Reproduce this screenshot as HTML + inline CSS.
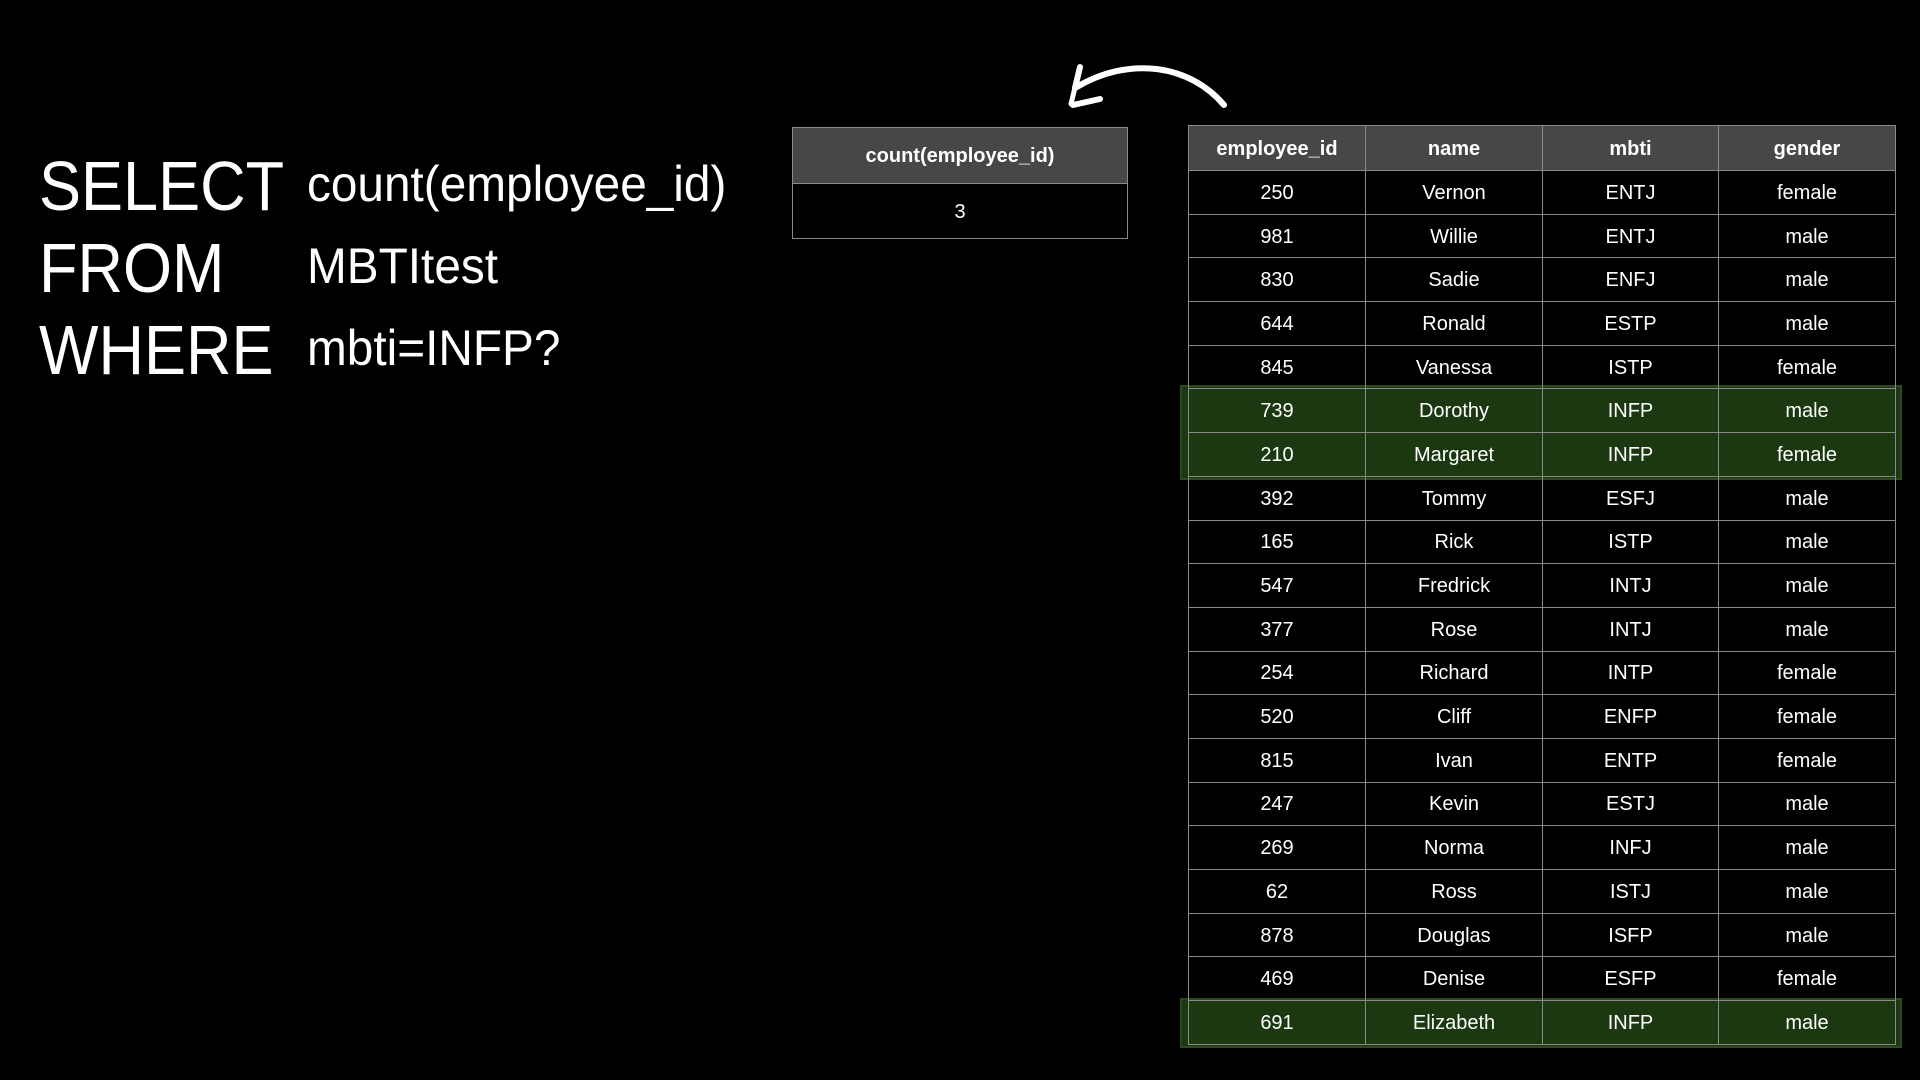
<!DOCTYPE html>
<html><head><meta charset="utf-8"><style>
body{margin:0;width:1920px;height:1080px;background:#000;position:relative;overflow:hidden;font-family:"Liberation Sans",Arial,sans-serif;color:#fff}
.big{position:absolute;left:39px;font-size:70px;line-height:1;transform:scaleX(0.9);transform-origin:0 0}
.small{position:absolute;left:307px;font-size:50px;line-height:1;transform:scaleX(0.955);transform-origin:0 0}
table{position:absolute;border-collapse:collapse;table-layout:fixed}
td,th{border:1.5px solid #8a8a8a;text-align:center;font-size:20px;padding:2px 0 0}
th{background:#474747;font-weight:bold}
.hl{position:absolute;background:#1b3811;border:2px solid #2b4a20;box-sizing:border-box}
</style></head><body>
<div class="big" style="top:151px">SELECT</div>
<div class="big" style="top:233px">FROM</div>
<div class="big" style="top:315px">WHERE</div>
<div class="small" style="top:159px">count(employee_id)</div>
<div class="small" style="top:241px">MBTItest</div>
<div class="small" style="top:323px">mbti=INFP?</div>

<svg style="position:absolute;left:0;top:0" width="1920" height="1080">
<path d="M1224 105 C1190 65 1130 55 1075 88" stroke="#fff" stroke-width="6" fill="none" stroke-linecap="round"/>
<path d="M1075 88 L1080 67 M1073 105 L1100 99" stroke="#fff" stroke-width="6" fill="none" stroke-linecap="round"/>
<path d="M1080 67 L1071 104" stroke="#fff" stroke-width="5" fill="none" stroke-linecap="round"/>
</svg>

<table style="left:792px;top:127px;width:336px">
<tr style="height:56px"><th>count(employee_id)</th></tr>
<tr style="height:55px"><td>3</td></tr>
</table>

<div class="hl" style="left:1180px;top:385px;width:722px;height:95px"></div>
<div class="hl" style="left:1180px;top:998px;width:722px;height:50px"></div>

<table style="left:1188px;top:125px;width:707px">
<colgroup><col style="width:177px"><col style="width:177px"><col style="width:176px"><col style="width:177px"></colgroup>
<tr style="height:45px"><th>employee_id</th><th>name</th><th>mbti</th><th>gender</th></tr>
<tr style="height:43.7px"><td>250</td><td>Vernon</td><td>ENTJ</td><td>female</td></tr>
<tr style="height:43.7px"><td>981</td><td>Willie</td><td>ENTJ</td><td>male</td></tr>
<tr style="height:43.7px"><td>830</td><td>Sadie</td><td>ENFJ</td><td>male</td></tr>
<tr style="height:43.7px"><td>644</td><td>Ronald</td><td>ESTP</td><td>male</td></tr>
<tr style="height:43.7px"><td>845</td><td>Vanessa</td><td>ISTP</td><td>female</td></tr>
<tr style="height:43.7px"><td>739</td><td>Dorothy</td><td>INFP</td><td>male</td></tr>
<tr style="height:43.7px"><td>210</td><td>Margaret</td><td>INFP</td><td>female</td></tr>
<tr style="height:43.7px"><td>392</td><td>Tommy</td><td>ESFJ</td><td>male</td></tr>
<tr style="height:43.7px"><td>165</td><td>Rick</td><td>ISTP</td><td>male</td></tr>
<tr style="height:43.7px"><td>547</td><td>Fredrick</td><td>INTJ</td><td>male</td></tr>
<tr style="height:43.7px"><td>377</td><td>Rose</td><td>INTJ</td><td>male</td></tr>
<tr style="height:43.7px"><td>254</td><td>Richard</td><td>INTP</td><td>female</td></tr>
<tr style="height:43.7px"><td>520</td><td>Cliff</td><td>ENFP</td><td>female</td></tr>
<tr style="height:43.7px"><td>815</td><td>Ivan</td><td>ENTP</td><td>female</td></tr>
<tr style="height:43.7px"><td>247</td><td>Kevin</td><td>ESTJ</td><td>male</td></tr>
<tr style="height:43.7px"><td>269</td><td>Norma</td><td>INFJ</td><td>male</td></tr>
<tr style="height:43.7px"><td>62</td><td>Ross</td><td>ISTJ</td><td>male</td></tr>
<tr style="height:43.7px"><td>878</td><td>Douglas</td><td>ISFP</td><td>male</td></tr>
<tr style="height:43.7px"><td>469</td><td>Denise</td><td>ESFP</td><td>female</td></tr>
<tr style="height:43.7px"><td>691</td><td>Elizabeth</td><td>INFP</td><td>male</td></tr>
</table>
</body></html>
